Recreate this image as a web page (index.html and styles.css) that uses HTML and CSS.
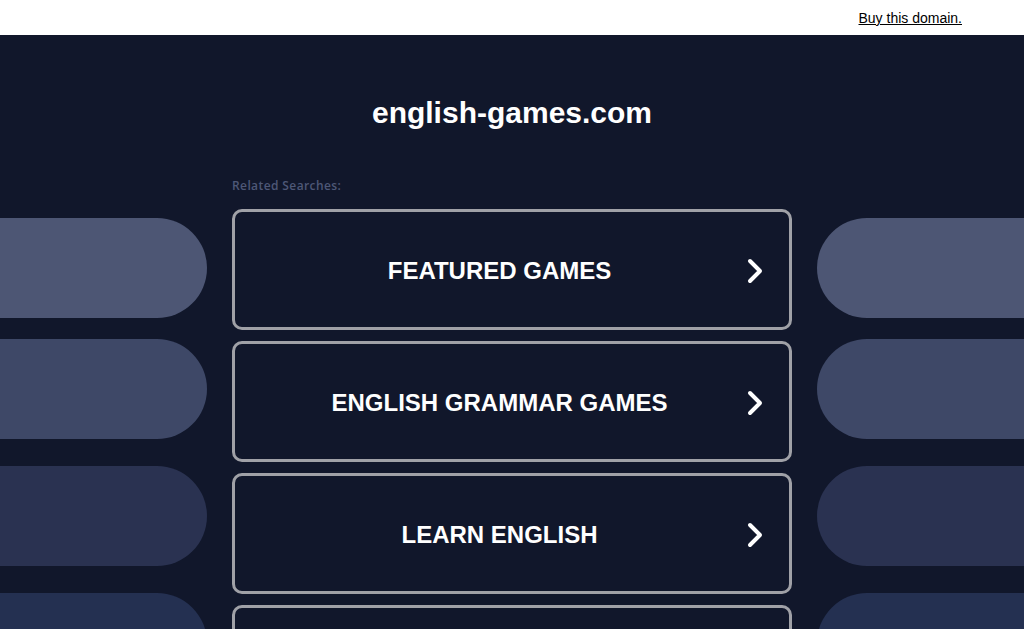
FILE: index.html
```html
<!DOCTYPE html>
<html lang="en">
<head>
    <meta charset="UTF-8">
    <meta name="viewport" content="width=device-width, initial-scale=1.0">
    <title>english-games.com</title>
    <link rel="stylesheet" href="styles.css">
</head>
<body>
    <div class="topbar">
        <a href="#">Buy this domain.</a>
    </div>

    <div class="main">
        <h1>english-games.com</h1>

        <div class="row">
            <div class="side side-left">
                <div class="pill"></div>
                <div class="pill"></div>
                <div class="pill"></div>
                <div class="pill"></div>
            </div>

            <div class="center">
                <div class="related">Related Searches:</div>
                <a class="search" href="#">
                    <span class="label">FEATURED GAMES</span>
                    <svg class="chev" viewBox="0 0 20 28"><path d="M5 4 L15 14 L5 24" /></svg>
                </a>
                <a class="search" href="#">
                    <span class="label">ENGLISH GRAMMAR GAMES</span>
                    <svg class="chev" viewBox="0 0 20 28"><path d="M5 4 L15 14 L5 24" /></svg>
                </a>
                <a class="search" href="#">
                    <span class="label">LEARN ENGLISH</span>
                    <svg class="chev" viewBox="0 0 20 28"><path d="M5 4 L15 14 L5 24" /></svg>
                </a>
                <a class="search" href="#">
                    <span class="label">ENGLISH COURSES</span>
                    <svg class="chev" viewBox="0 0 20 28"><path d="M5 4 L15 14 L5 24" /></svg>
                </a>
            </div>

            <div class="side side-right">
                <div class="pill"></div>
                <div class="pill"></div>
                <div class="pill"></div>
                <div class="pill"></div>
            </div>
        </div>
    </div>
</body>
</html>
```

FILE: styles.css
```css
html, body {
    margin: 0;
    padding: 0;
    height: 100%;
    overflow: hidden;
}
body {
    font-family: "Liberation Sans", Arial, sans-serif;
    background-color: #11172b;
}
.topbar {
    height: 35px;
    background: #fff;
    display: flex;
    justify-content: flex-end;
    align-items: flex-start;
    padding-right: 62px;
    box-sizing: border-box;
}
.topbar a {
    color: #000;
    font-size: 14px;
    line-height: 16px;
    margin-top: 10px;
    text-decoration: underline;
}
.main {
    background-color: #11172b;
}
h1 {
    margin: 0;
    padding-top: 58px;
    height: 40px;
    line-height: 40px;
    text-align: center;
    color: #fff;
    font-size: 30px;
    font-weight: bold;
}
.row {
    display: grid;
    grid-template-columns: 207px 560px 207px;
    column-gap: 25px;
    margin-top: 44px;
}
.side {
    display: flex;
    flex-direction: column;
    padding-top: 41px;
}
.pill {
    height: 100px;
    flex-shrink: 0;
}
.pill + .pill {
    margin-top: 27px;
}
.pill:nth-child(2) {
    margin-top: 21px;
}
.side-left .pill {
    border-radius: 0 50px 50px 0;
}
.side-right .pill {
    border-radius: 50px 0 0 50px;
}
.pill:nth-child(1) { background: #4d5674; }
.pill:nth-child(2) { background: #3e4867; }
.pill:nth-child(3) { background: #2a3251; }
.pill:nth-child(4) { background: #243051; }
.related {
    font-family: "Open Sans", sans-serif;
    font-size: 12px;
    font-weight: 600;
    letter-spacing: 0.4px;
    line-height: 17px;
    color: #4e5877;
    margin-bottom: 15px;
}
.search {
    display: flex;
    align-items: center;
    height: 121px;
    box-sizing: border-box;
    border: 3px solid #a0a1a7;
    border-radius: 10px;
    padding: 2px 24px 0 19px;
    margin-bottom: 11px;
    color: #fff;
    text-decoration: none;
}
.search .label {
    flex: 1;
    text-align: center;
    font-size: 24px;
    font-weight: bold;
}
.chev {
    width: 20px;
    height: 28px;
}
.chev path {
    fill: none;
    stroke: #fff;
    stroke-width: 4;
    stroke-linecap: round;
    stroke-linejoin: round;
}
```
